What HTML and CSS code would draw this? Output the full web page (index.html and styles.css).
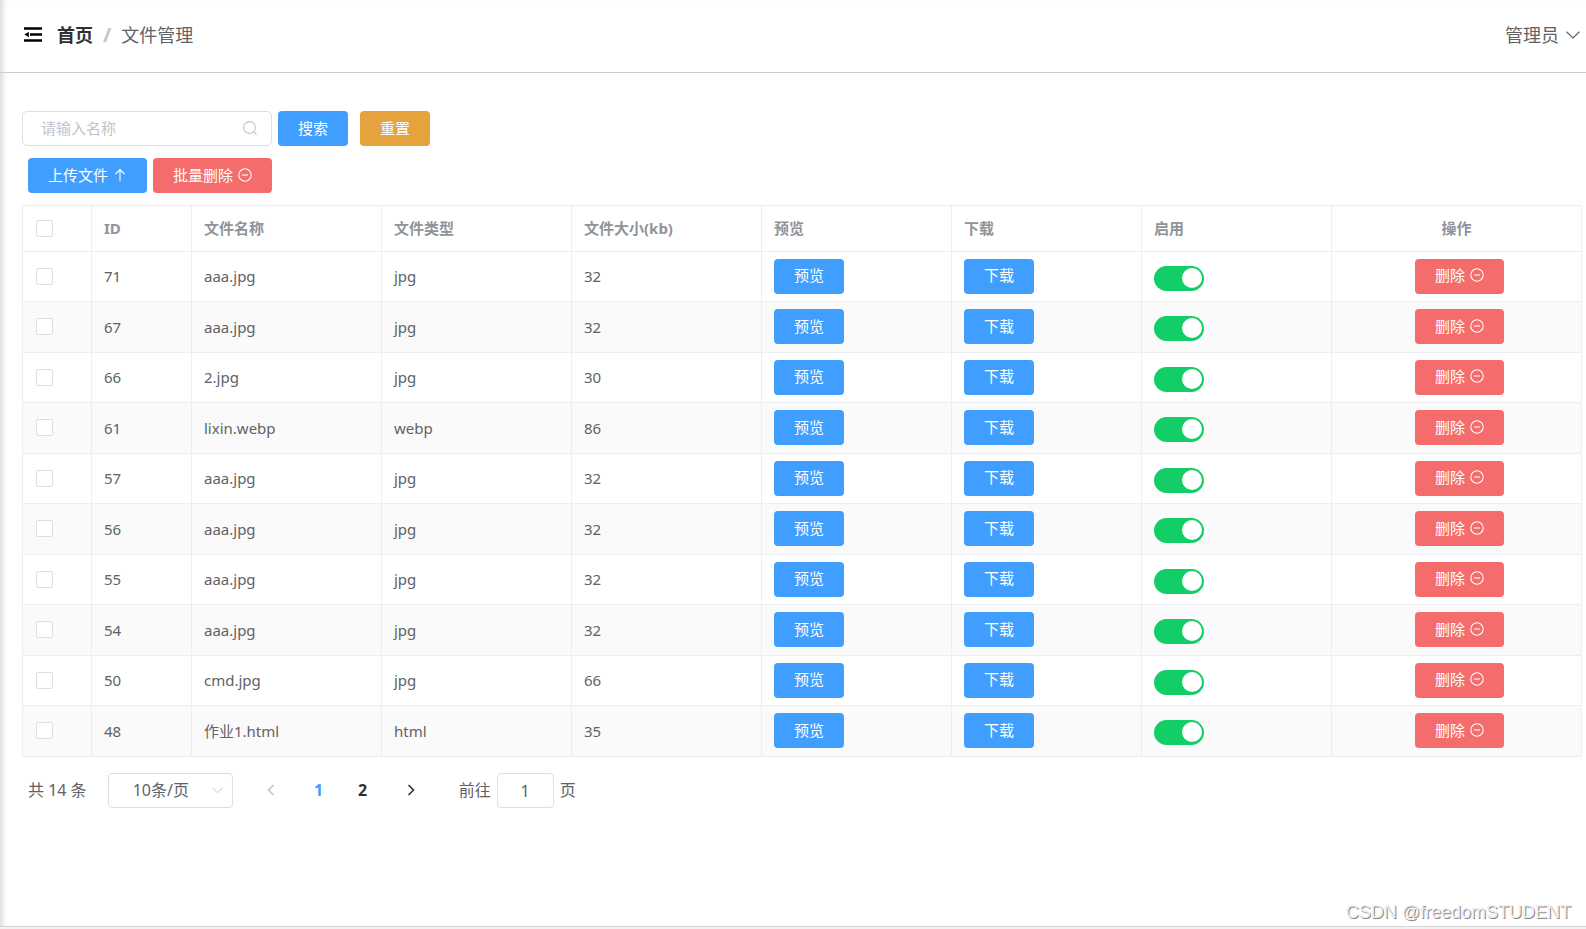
FILE: index.html
```html
<!DOCTYPE html>
<html lang="zh-CN">
<head>
<meta charset="utf-8">
<title>文件管理</title>
<link rel="stylesheet" href="styles.css">
</head>
<body>
<svg class="sprite" aria-hidden="true">
  <symbol id="i-minus" viewBox="0 0 14 14"><circle cx="7" cy="7" r="6.2" fill="none" stroke="currentColor" stroke-width="1.1"/><path d="M4 7h6" stroke="currentColor" stroke-width="1.1"/></symbol>
</svg>
<div class="app">
  <header class="header">
    <button class="fold" aria-label="折叠菜单">
      <svg width="18" height="15" viewBox="0 0 18 15"><path d="M0 1.500h18M6 7.500h12M0 13.500h18" stroke="currentColor" stroke-width="2.600"/><path d="M0.500 7.500L4.800 4.700V10.300Z" fill="currentColor"/></svg>
    </button>
    <nav class="crumbs"><a class="home" href="#">首页</a><span class="sep">/</span><span>文件管理</span></nav>
    <button class="user">管理员
      <svg width="14" height="8" viewBox="0 0 14 8"><path d="M0.500 0.700L7 7L13.500 0.700" fill="none" stroke="currentColor" stroke-width="1.200"/></svg>
    </button>
  </header>
  <main class="main">
    <form class="search">
      <label class="field">
        <input type="text" placeholder="请输入名称" aria-label="名称">
        <svg width="14" height="14" viewBox="0 0 14 14"><circle cx="6.500" cy="6.500" r="5.900" fill="none" stroke="currentColor" stroke-width="1.100"/><path d="M10.700 10.700L13.500 13.500" stroke="currentColor" stroke-width="1.100"/></svg>
      </label>
      <button class="btn primary" type="button">搜索</button>
      <button class="btn warning" type="button">重置</button>
    </form>
    <div class="actions">
      <button class="btn primary">上传文件 <svg class="ico" viewBox="0 0 14 14"><path d="M7 13V1.500M2.500 6L7 1.500L11.500 6" fill="none" stroke="currentColor" stroke-width="1.100"/></svg></button>
      <button class="btn danger">批量删除 <svg class="ico"><use href="#i-minus"/></svg></button>
    </div>
    <table class="files">
      <colgroup><col class="c-check"><col class="c-id"><col><col><col><col><col><col><col class="c-op"></colgroup>
      <thead><tr><th><input type="checkbox" class="check" aria-label="全选"></th><th>ID</th><th>文件名称</th><th>文件类型</th><th>文件大小(kb)</th><th>预览</th><th>下载</th><th>启用</th><th class="op">操作</th></tr></thead>
      <tbody id="rows"></tbody>
    </table>
    <div class="pager">
      <span class="total">共 14 条</span>
      <label class="size">
        <select aria-label="每页条数"><option>10条/页</option><option>20条/页</option></select>
        <svg width="11" height="7" viewBox="0 0 11 7"><path d="M0.500 0.700L5.500 5.700L10.500 0.700" fill="none" stroke="currentColor"/></svg>
      </label>
      <div class="pages">
        <button class="arrow" disabled aria-label="上一页"><svg width="8" height="12" viewBox="0 0 8 12"><path d="M6.500 1L1.500 6L6.500 11" fill="none" stroke="currentColor" stroke-width="1.600"/></svg></button>
        <button class="page current">1</button>
        <button class="page">2</button>
        <button class="arrow" aria-label="下一页"><svg width="8" height="12" viewBox="0 0 8 12"><path d="M1.500 1L6.500 6L1.500 11" fill="none" stroke="currentColor" stroke-width="1.600"/></svg></button>
      </div>
      <label class="jump"><span>前往</span><input type="text" value="1"><span>页</span></label>
    </div>
  </main>
  <footer class="edge"></footer>
  <span class="watermark">CSDN @freedomSTUDENT</span>
</div>
<script src="app.js"></script>
</body>
</html>
```
FILE: styles.css
```css
* { box-sizing: border-box; }
body {
  margin: 0;
  background: #fff;
  color: #606266;
  font-family: "Noto Sans", "Noto Sans CJK SC", sans-serif;
  font-size: 15px;
  line-height: 22px;
}
button, input, select { font: inherit; color: inherit; }
button { padding: 0; border: 0; background: none; cursor: pointer; }
.sprite { position: absolute; width: 0; height: 0; }

.app {
  position: relative;
  display: flex;
  flex-direction: column;
  min-height: 100vh;
  box-shadow: inset 7px 0 6px -5px #cfd2d8;
}
.header {
  display: flex;
  align-items: center;
  height: 73px;
  padding: 0 6px 3px 24px;
  border-bottom: 1px solid #ccc;
  font-size: 18px;
}
.fold { display: flex; color: #000; }
.crumbs { display: flex; margin-left: 15px; }
.home { color: #303133; font-weight: 700; text-decoration: none; }
.sep { margin: 0 10px; color: #c0c4cc; font-size: 20px; font-weight: 700; }
.user { display: flex; align-items: center; gap: 7px; margin-left: auto; }

.main { flex: 1; padding: 38px 4px 0 22px; }
.search { display: flex; align-items: center; }
.field { position: relative; width: 250px; margin-right: 6px; color: #c0c4cc; }
.field input {
  display: block;
  width: 100%;
  height: 35px;
  padding: 0 35px 2px 18px;
  border: 1px solid #dcdfe6;
  border-radius: 5px;
  background: none;
  color: #606266;
}
.field input::placeholder { color: #c0c4cc; }
.field svg { position: absolute; right: 15px; top: 10px; }
.btn {
  display: inline-flex;
  align-items: center;
  justify-content: center;
  gap: 5px;
  height: 35px;
  padding: 0 20px 2px;
  border-radius: 4px;
  color: #fff;
  vertical-align: middle;
}
.primary { background: #409eff; }
.warning { margin-left: 12px; background: #e6a23c; }
.danger { background: #f56c6c; }
.ico { width: 14px; height: 14px; }
.actions { display: flex; gap: 6px; margin: 12px 6px; }

.files {
  width: 100%;
  table-layout: fixed;
  border-collapse: collapse;
}
.c-check { width: 69px; }
.c-id { width: 100px; }
.c-op { width: 250px; }
.files th, .files td {
  padding: 0 12px;
  border: 1px solid #ebeef5;
  text-align: left;
}
.files th { height: 46px; padding-bottom: 1px; color: #909399; font-weight: 700; }
.files td { height: 50px; padding-bottom: 1px; }
.files tbody tr:nth-child(even) { background: #fafafa; }
.files tbody tr:nth-child(even) td { height: 51px; }
.files .op { text-align: center; }
.op .btn { margin-left: 6px; }
.check {
  display: block;
  appearance: none;
  width: 17px;
  height: 17px;
  margin: 0 1px;
  border: 1px solid #dcdfe6;
  border-radius: 2px;
  background: #fff;
}
.switch {
  display: block;
  appearance: none;
  width: 50px;
  height: 25px;
  margin: 4px 0 0;
  padding: 2px;
  border-radius: 13px;
  background: #dcdfe6;
}
.switch::before {
  content: "";
  display: block;
  width: 20px;
  height: 20px;
  border-radius: 50%;
  background: #fff;
}
.switch:checked { background: #13ce66; }
.switch:checked::before { margin-left: auto; }

.pager {
  display: flex;
  align-items: center;
  padding: 16px 6px;
  font-size: 16px;
}
.total, .jump span { padding-bottom: 2px; }
.size { position: relative; width: 125px; margin-left: 21px; }
.size select {
  display: block;
  appearance: none;
  width: 100%;
  height: 35px;
  padding: 0 24px 2px;
  border: 1px solid #dcdfe6;
  border-radius: 4px;
  background: #fff;
}
.size svg { position: absolute; right: 10px; top: 14px; color: #c0c4cc; }
.pages { display: flex; margin-left: 12px; color: #303133; }
.arrow, .page { display: flex; align-items: center; justify-content: center; height: 35px; padding-bottom: 2px; }
.arrow { width: 52px; }
.page { width: 44px; font-weight: 700; }
.arrow:disabled { color: #c0c4cc; }
.current { color: #409eff; }
.jump { display: flex; align-items: center; gap: 6px; margin-left: 22px; }
.jump input {
  width: 57px;
  height: 35px;
  border: 1px solid #dcdfe6;
  border-radius: 4px;
  text-align: center;
}
.edge { height: 3px; border-top: 1px solid #d4d4d4; background: #f2f2f2; }
.watermark {
  position: absolute;
  right: 15px;
  bottom: 6px;
  color: #eee;
  font: 18px/22px "Liberation Sans", sans-serif;
  text-shadow: 1px 1px 0 #888;
}
```
FILE: app.js
```js
const files = [
  [71, "aaa.jpg", "jpg", 32], [67, "aaa.jpg", "jpg", 32], [66, "2.jpg", "jpg", 30],
  [61, "lixin.webp", "webp", 86], [57, "aaa.jpg", "jpg", 32], [56, "aaa.jpg", "jpg", 32],
  [55, "aaa.jpg", "jpg", 32], [54, "aaa.jpg", "jpg", 32], [50, "cmd.jpg", "jpg", 66],
  [48, "作业1.html", "html", 35]
];
document.getElementById("rows").innerHTML = files.map(([id, name, type, size]) => `
  <tr>
    <td><input type="checkbox" class="check" aria-label="选择 ${id}"></td>
    <td>${id}</td><td>${name}</td><td>${type}</td><td>${size}</td>
    <td><button class="btn primary">预览</button></td>
    <td><button class="btn primary">下载</button></td>
    <td><input type="checkbox" class="switch" checked aria-label="启用 ${id}"></td>
    <td class="op"><button class="btn danger">删除 <svg class="ico"><use href="#i-minus"/></svg></button></td>
  </tr>`).join("");
```
